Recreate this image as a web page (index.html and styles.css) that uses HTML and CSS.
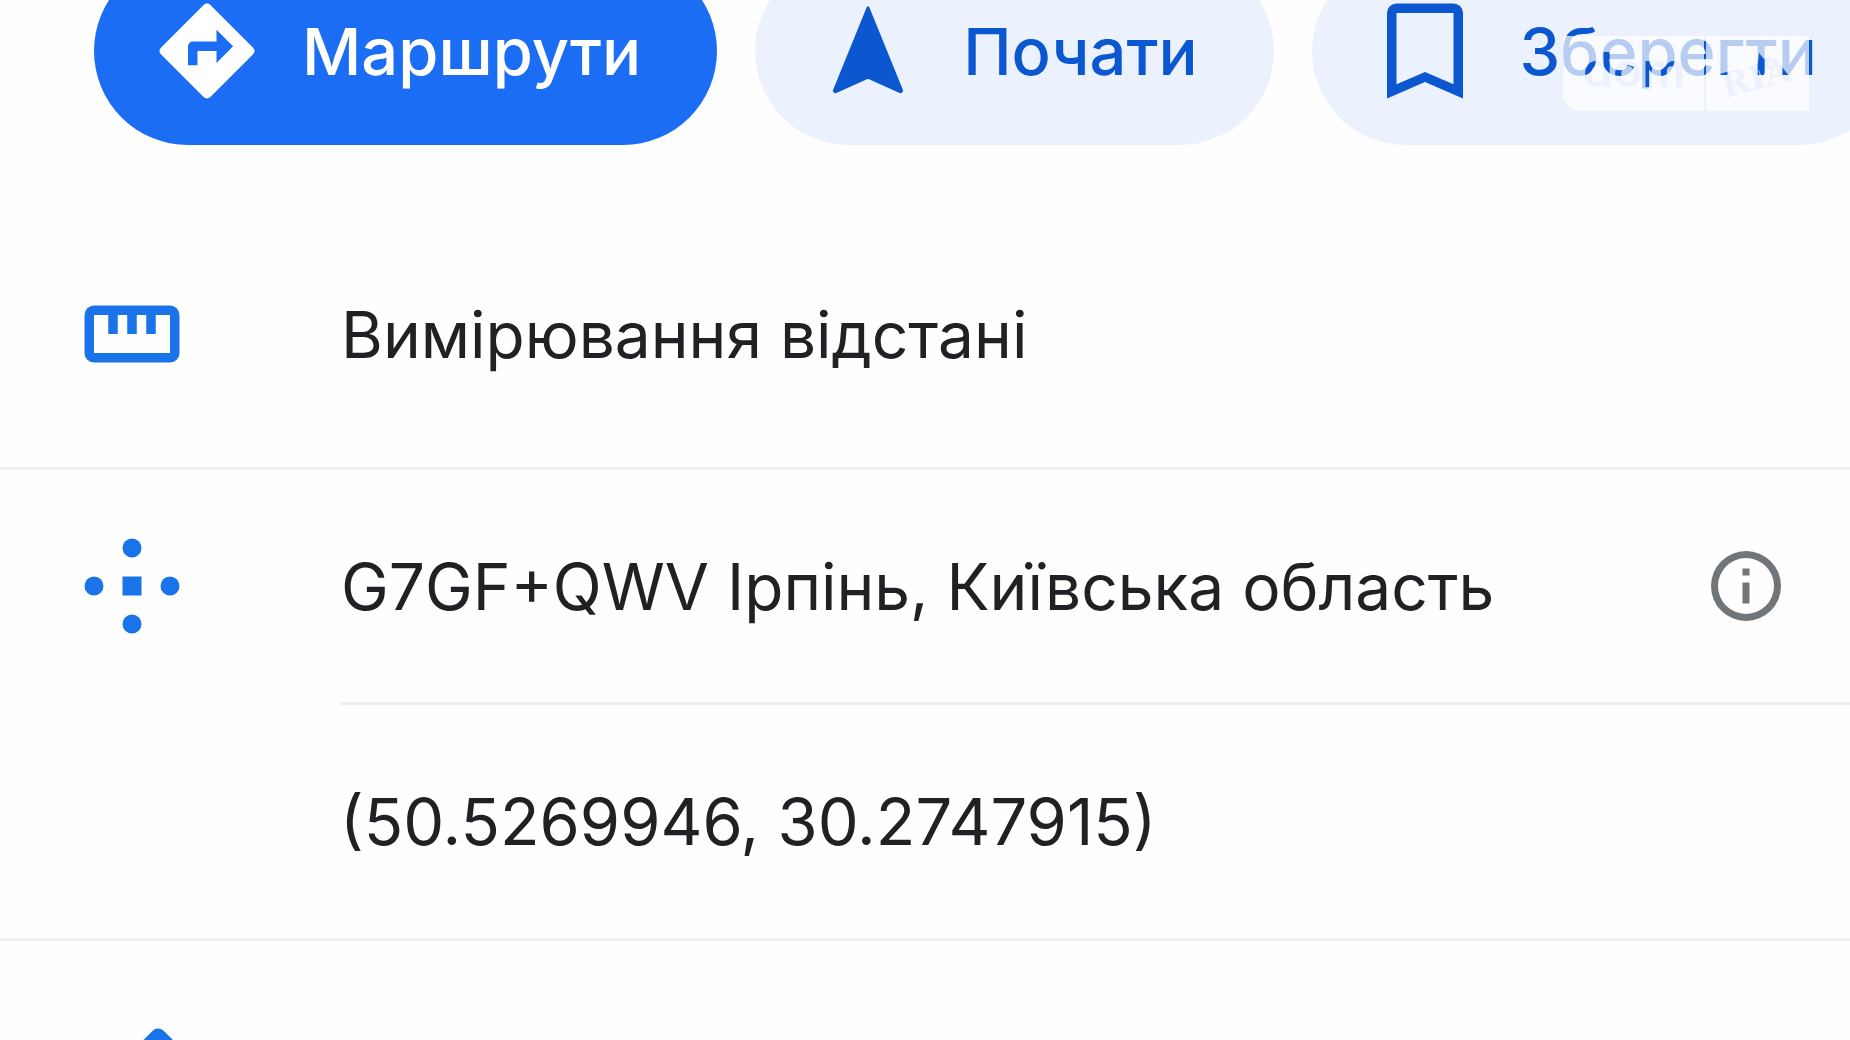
FILE: index.html
```html
<!DOCTYPE html>
<html lang="uk">
<head>
    <meta charset="UTF-8">
    <meta name="viewport" content="width=device-width, initial-scale=1.0">
    <title>Ірпінь, Київська область</title>
    <link rel="stylesheet" href="styles.css">
</head>
<body>
    <main class="sheet">
        <div class="actions">
            <button type="button" class="chip chip-primary">
                <svg class="icon" viewBox="0 0 24 24" aria-hidden="true">
                    <path fill="currentColor" d="M21.71 11.29l-9-9a1 1 0 0 0-1.42 0l-9 9a1 1 0 0 0 0 1.42l9 9a1 1 0 0 0 1.42 0l9-9a1 1 0 0 0 0-1.42zM14 14.5V12h-4v3H8v-4a1 1 0 0 1 1-1h5V7.500l3.500 3.500z"/>
                </svg>
                Маршрути
            </button>
            <button type="button" class="chip">
                <svg class="icon" viewBox="0 0 24 24" aria-hidden="true">
                    <path fill="currentColor" stroke="currentColor" stroke-width="0.6" stroke-linejoin="round" d="M12 2.900l7.100 17.500-.2.2L12 17.500l-6.900 3.100-.2-.2z"/>
                </svg>
                Почати
            </button>
            <div class="save">
                <button type="button" class="chip">
                    <svg class="icon" viewBox="0 0 24 24" aria-hidden="true">
                        <path fill="currentColor" d="M18 2H6a2 2 0 0 0-2 2v18l8-3.500 8 3.500V4a2 2 0 0 0-2-2zm0 17l-6-2.600L6 19V4h12z"/>
                    </svg>
                    Зберегти
                </button>
                <svg class="watermark" viewBox="0 0 246 75" aria-hidden="true">
                    <mask id="cut">
                        <path fill="#fff" d="M0 0H246V75H18A18 18 0 0 1 0 57z"/>
                        <text class="mark-dom" x="20" y="51">dom</text>
                        <path d="M141 0h2v75h-2z"/>
                        <path d="M196 17l5 6 9-3-4 8 6 6-9 0-4 8-3-8-9-1 8-6z"/>
                        <text class="mark-ria" x="162" y="62" transform="rotate(-15 162 62)">RIA</text>
                    </mask>
                    <path class="mark-plate" mask="url(#cut)" d="M0 0H246V75H0z"/>
                </svg>
            </div>
        </div>

        <ul class="rows">
            <li class="row row-first">
                <svg class="icon" viewBox="0 0 24 24" aria-hidden="true">
                    <path fill="currentColor" d="M20 6H4a2 2 0 0 0-2 2v8a2 2 0 0 0 2 2h16a2 2 0 0 0 2-2V8a2 2 0 0 0-2-2zm0 10H4V8h3v4h2V8h2v4h2V8h2v4h2V8h3z"/>
                </svg>
                <span class="label">Вимірювання відстані</span>
            </li>
            <li class="row row-code">
                <svg class="icon" viewBox="0 0 24 24" aria-hidden="true">
                    <g fill="currentColor">
                        <circle cx="12" cy="4" r="2"/>
                        <circle cx="4" cy="12" r="2"/>
                        <circle cx="20" cy="12" r="2"/>
                        <circle cx="12" cy="20" r="2"/>
                        <path d="M10 10h4v4h-4z"/>
                    </g>
                </svg>
                <span class="label">G7GF+QWV Ірпінь, Київська область</span>
                <button type="button" class="info" aria-label="Докладніше">
                    <svg viewBox="0 0 24 24" aria-hidden="true">
                        <path fill="currentColor" d="M12 2a10 10 0 1 0 0 20 10 10 0 0 0 0-20zm0 18a8 8 0 1 1 0-16 8 8 0 0 1 0 16zM11 7h2v2h-2zm0 4h2v6h-2z"/>
                    </svg>
                </button>
            </li>
            <li class="row row-coords">
                <span class="label">(50.5269946, 30.2747915)</span>
            </li>
            <li class="row row-last">
                <svg class="icon" viewBox="0 0 24 24" aria-hidden="true">
                    <path fill="currentColor" d="M16.300 2.500a1.700 1.700 0 0 1 2.400 0l2.800 2.800a1.700 1.700 0 0 1 0 2.400L8 21H3v-5z"/>
                </svg>
            </li>
        </ul>
    </main>
</body>
</html>
```

FILE: styles.css
```css
* {
    margin: 0;
    padding: 0;
    box-sizing: border-box;
}

body {
    background-color: #fefefe;
    color: #202124;
    font-family: Inter, "Noto Sans", sans-serif;
    font-size: 64px;
    overflow: hidden;
}

button {
    border: none;
    background: none;
    font: inherit;
    cursor: pointer;
}

.sheet {
    height: 100vh;
    overflow: hidden;
}

/* the chips are partly scrolled out at the top */
.actions {
    display: flex;
    gap: 38px;
    margin-top: -43px;
    padding-left: 94px;
}

.icon {
    flex: none;
    width: 114px;
    height: 114px;
    color: #1a73e8;
}

.chip {
    flex: none;
    display: flex;
    align-items: center;
    gap: 38px;
    height: 188px;
    padding: 0 76px 0 56px;
    border-radius: 94px;
    background-color: #ecf1fe;
    color: #0b57d0;
    font-size: 65px;
    font-weight: 500;
    white-space: nowrap;
}

.chip .icon {
    color: inherit;
}

.chip-primary {
    background-color: #1b6ef3;
    color: #fff;
}

.save {
    position: relative;
    flex: none;
}

.watermark {
    position: absolute;
    left: 251px;
    top: 79px;
    width: 246px;
    height: 75px;
}

.mark-plate {
    fill: #fff;
    fill-opacity: 0.7;
}

.mark-dom {
    font-size: 48px;
    font-weight: 600;
}

.mark-ria {
    font-family: "DejaVu Serif", serif;
    font-size: 34px;
    font-weight: 700;
}

.rows {
    list-style: none;
}

.row {
    display: flex;
    align-items: center;
    gap: 152px;
    height: 236px;
    padding: 0 62px 0 75px;
    border-bottom: 3px solid #efefef;
}

.row-first {
    height: 269px;
    margin-top: 56px;
}

.row-code {
    height: 232px;
    border-bottom: none;
}

.row-coords {
    align-items: stretch;
    height: 239px;
    padding: 0 0 0 340px;
}

.row-coords .label {
    display: flex;
    align-items: center;
    border-top: 3px solid #efefef;
    font-size: 65px;
}

.row-last {
    height: 272px;
}

.label {
    flex: 1;
    white-space: nowrap;
}

.info {
    flex: none;
    width: 84px;
    height: 84px;
    color: #70757a;
}

.info svg {
    display: block;
}
```
